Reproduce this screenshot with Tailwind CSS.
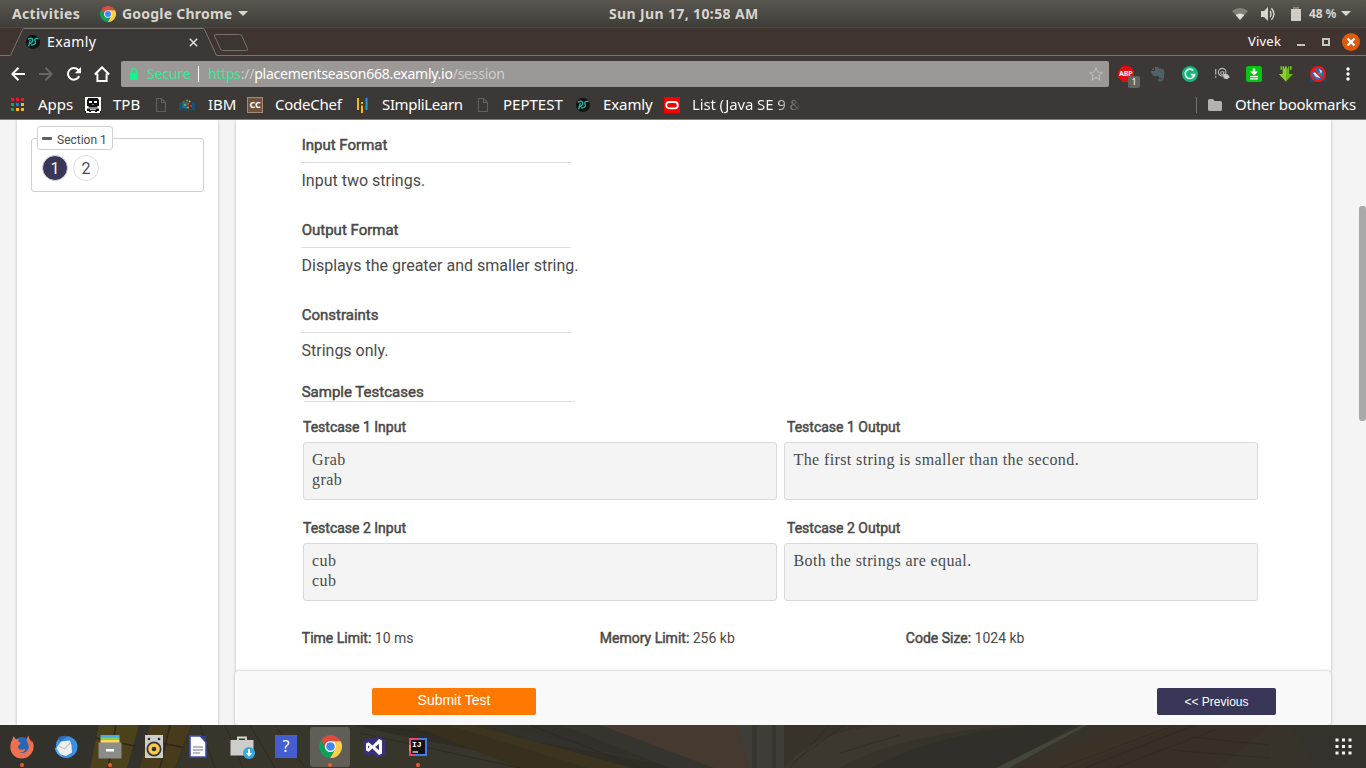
<!DOCTYPE html>
<html lang="en">
<head>
<meta charset="utf-8">
<title>Examly</title>
<script src="https://cdn.jsdelivr.net/npm/@tailwindcss/browser@4"></script>
</head>
<body class="w-[1366px] h-[768px] overflow-hidden flex flex-col bg-[#3c3835] font-['Noto_Sans',sans-serif]">

<!-- shared symbols -->
<svg width="0" height="0" class="absolute">
  <defs>
    <symbol id="chrome" viewBox="0 0 24 24">
      <path d="M2.300 5A12 12 0 0 1 22.600 6.400H12A5.600 5.600 0 0 0 7.150 14.800z" fill="#dd4b3e"/>
      <path d="M22.600 6.400A12 12 0 0 1 11.500 24L16.850 14.800A5.600 5.600 0 0 0 12 6.400z" fill="#ffcd46"/>
      <path d="M2.300 5A12 12 0 0 0 11.500 24L16.850 14.800A5.600 5.600 0 0 1 7.150 14.800z" fill="#109d58"/>
      <circle cx="12" cy="12" r="5.800" fill="#fff"/><circle cx="12" cy="12" r="4.500" fill="#4285f4"/>
    </symbol>
    <symbol id="examly" viewBox="0 0 14 14">
      <circle cx="7" cy="7" r="7" fill="#101211"/>
      <path d="M2.600 11.500 4.200 5.200M1.800 4.200Q4 3 5.700 3.400 7.300 4.200 6.500 6.200 5.600 8.400 3.600 8.600M12.600 3.600Q9.600 2.800 8.900 4.300 8.600 5.500 9.300 6.600 9.900 8.300 8.500 9.300 7 10.300 5 9.900" fill="none" stroke="#16b8a6" stroke-width="1.350"/>
    </symbol>
    <symbol id="page" viewBox="0 0 12 14">
      <path d="M1.500.5h5l4 4v9h-9zM6.500.5v4h4" fill="none" stroke="#62605d" stroke-width="1.100"/>
    </symbol>
  </defs>
</svg>

<!-- desktop top bar -->
<header class="h-[28px] shrink-0 flex items-center bg-linear-to-b from-[#595750] to-[#3e3d38] border-b border-[#4c4a45] text-[14px] font-bold text-[#d8d5ce] whitespace-nowrap">
  <div class="w-[100px] pl-3 tracking-[0.3px]">Activities</div>
  <svg class="w-4 h-4 shrink-0 mr-1.5"><use href="#chrome"/></svg>
  <div class="w-[116px] tracking-[0.22px]">Google Chrome</div>
  <svg class="w-[10px] h-[5px] shrink-0"><path d="M0 0h10L5 5z" fill="#d8d5ce"/></svg>
  <div class="ml-[361px] w-[623px] tracking-[0.37px]">Sun Jun 17, 10:58 AM</div>
  <svg class="w-4 h-3 shrink-0" viewBox="0 0 16 12"><path d="M0 3Q8-3 16 3L8 12z" fill="#827f79"/><path d="M3.600 7Q8 4 12.400 7L8 12z" fill="#e0ddd6"/></svg>
  <svg class="w-4 h-4 ml-3 shrink-0" viewBox="0 0 16 16"><path d="M1 5h3l4-4v14l-4-4H1z" fill="#d8d5ce"/><path d="M10 5q2 3 0 6M11.400 2.200q5 5.800 0 11.600" fill="none" stroke="#d8d5ce" stroke-width="1.400"/></svg>
  <svg class="w-3 h-[14px] ml-[14px] shrink-0" viewBox="0 0 12 14"><path d="M3 0h6v2h2v12H1V2h2z" fill="#cfccc6"/><path d="M3 0h6v2H3z" fill="#88857f"/></svg>
  <div class="ml-[7px] w-[32px] text-[12px] tracking-[-0.150px]">48 %</div>
  <svg class="w-[10px] h-[5px] shrink-0"><path d="M0 0h10L5 5z" fill="#d8d5ce"/></svg>
</header>

<!-- tab strip -->
<div class="relative h-[28px] shrink-0 bg-[#403431]">
  <svg class="absolute inset-0 w-[1366px] h-[28px]" viewBox="0 0 1366 28">
    <path d="M11 28 22.500 1.500Q23 .5 24 .5H203Q204 .5 204.500 1.500L216 28z" fill="#3c3835"/>
    <path d="M0 27.500H10.500L22.500 1.500Q23 .5 24 .5H203Q204 .5 204.500 1.500L216.500 27.500H1366" fill="none" stroke="#7b7571"/>
    <path d="M215.500 6.500h24q2 0 2.500 1.500l5.500 13q.6 1.500-1 1.500h-24q-1.500 0-2-1.500l-6-13q-.5-1.500 1-1.500z" fill="#3c3633" stroke="#77716d"/>
  </svg>
  <div class="relative h-[28px] flex items-center text-[14px] text-white">
    <svg class="w-[14px] h-[14px] ml-[26px] shrink-0"><use href="#examly"/></svg>
    <div class="ml-[7px] w-[142px] pb-[2px] tracking-[0.400px]">Examly</div>
    <svg class="w-[9px] h-[9px] shrink-0"><path d="M.8.8 8.200 8.200M8.200.8.8 8.200" stroke="#e4e1de" stroke-width="1.500"/></svg>
    <div class="ml-[1050px] w-[49px] text-[13px] tracking-[0.200px]">Vivek</div>
    <svg class="w-2 h-2 shrink-0 mt-2"><rect y="2" width="8" height="2" fill="#c9c4c0"/></svg>
    <svg class="w-2 h-2 ml-[17px] shrink-0"><rect x="1" y="1" width="6" height="6" fill="none" stroke="#c9c4c0" stroke-width="2"/></svg>
    <svg class="w-[18px] h-[18px] ml-3 shrink-0" viewBox="0 0 18 18"><circle cx="9" cy="9" r="9" fill="#e05a0b"/><path d="m5.500 5.500 7 7m0-7-7 7" stroke="#fff" stroke-width="2.400"/></svg>
  </div>
</div>

<!-- toolbar -->
<div class="h-[36px] shrink-0 flex items-center">
  <svg class="w-[14px] h-[14px] ml-[11px] shrink-0" viewBox="0 0 14 14"><path d="M14 7H1.500M7.500.8 1.400 7l6.100 6.200" fill="none" stroke="#fff" stroke-width="2"/></svg>
  <svg class="w-[14px] h-[14px] ml-[14px] shrink-0" viewBox="0 0 14 14"><path d="M0 7h12.500M6.500.8 12.600 7l-6.100 6.200" fill="none" stroke="#6a6663" stroke-width="2"/></svg>
  <svg class="w-[14px] h-[14px] ml-[14px] shrink-0" viewBox="0 0 14 14"><path d="M12.200 9A5.800 5.800 0 1 1 11 2.800L12 4" fill="none" stroke="#fff" stroke-width="2"/><path d="M14 0v6.200H7.800z" fill="#fff"/></svg>
  <svg class="w-4 h-4 ml-[13px] mr-[11px] shrink-0" viewBox="0 0 16 16"><path d="M.8 8.500 8 1.300l7.200 7.200M3.400 7.500V15h9.200V7.500" fill="none" stroke="#fff" stroke-width="2"/></svg>
  <div class="w-[988px] h-[26px] shrink-0 rounded-[2px] bg-[#9b9896] flex items-center text-[14px] leading-[26px] whitespace-nowrap">
    <svg class="w-2 h-3 ml-[9px] shrink-0 -mt-px" viewBox="0 0 8 12"><path d="M0 4.500h8V12H0z" fill="#12f58c"/><path d="M1.700 5V3a2.300 2.300 0 0 1 4.600 0v2" fill="none" stroke="#12f58c" stroke-width="1.200"/></svg>
    <span class="ml-[9px] w-[51px] text-[#3be897] tracking-[-0.150px]">Secure</span>
    <span class="w-px h-4 bg-white mr-[9px]"></span>
    <span class="w-[881px] tracking-[-0.250px] text-[#d0cecc]"><span class="text-[#3be897]">https</span>://<span class="text-white">placementseason668.examly.io</span>/session</span>
    <svg class="w-[14px] h-[14px] shrink-0" viewBox="0 0 14 14"><path d="m7 .9 1.800 4.100 4.500.4-3.400 3 1 4.400L7 10.500l-3.900 2.300 1-4.400-3.400-3 4.500-.4z" fill="none" stroke="#bab7b5" stroke-width="1.100"/></svg>
  </div>
  <!-- extensions -->
  <div class="relative ml-[9px] w-[16px] h-[16px] shrink-0">
    <svg class="w-4 h-4" viewBox="0 0 16 16"><path d="M4.700 0h6.600L16 4.700v6.600L11.300 16H4.700L0 11.300V4.700z" fill="#e30b0b"/></svg>
    <span class="absolute left-[1px] top-[4px] text-[7px] leading-[8px] font-bold text-white tracking-[-0.100px]">ABP</span>
    <span class="absolute left-[10px] top-[10px] w-[12px] h-[12px] rounded-[2px] bg-[#666463] text-[9px] leading-[12px] text-center text-white">1</span>
  </div>
  <svg class="w-[14px] h-[15px] ml-[17px] shrink-0" viewBox="0 0 14 15"><path d="M4 0h3l1 1.500 4 .5c1.500.5 1.600 4 1 8-.4 2.500-1 4-2.700 4.500H8.500c-1.500 0-2-2.500-.5-3h2v1.300H9V13h1.500V11L8 10.500 7 8.500C5.500 10 3 9.500 2 8.500 1 7.500.2 5.500 0 4h4z" fill="#4e6268"/><path d="M.3 3 3 .4V3z" fill="#4e6268"/><path d="M9.500 5.500q1.200-.8 2 .6z" fill="#363534"/></svg>
  <svg class="w-4 h-4 ml-[17px] shrink-0" viewBox="0 0 16 16"><circle cx="8" cy="8" r="8" fill="#12b779"/><path d="M11.300 4.500A4.700 4.700 0 1 0 12.600 8.600H8.800" fill="none" stroke="#efffF8" stroke-width="1.600"/><path d="M10.600 10.600l2-2.200" stroke="#efffF8" stroke-width="1.300"/></svg>
  <svg class="w-4 h-4 ml-4 shrink-0" viewBox="0 0 16 16"><path d="M1.700 3v5.500M1.700 10v1.700" stroke="#a9a6a3" stroke-width="1.400"/><path d="M10 9.500A3.800 3.800 0 1 1 12 6.500L11.500 8.500H9.800V5.500" fill="none" stroke="#bab7b4" stroke-width="1.100"/><circle cx="8.200" cy="7" r="1.500" fill="none" stroke="#bab7b4"/><path d="m9.500 8.800 4-.8 2.300 3.200-2.800 2-3.500-1z" fill="#c9c6c3"/></svg>
  <svg class="w-4 h-4 ml-4 shrink-0" viewBox="0 0 16 16"><rect width="16" height="16" rx="2.500" fill="#05c414"/><path d="M6.800 2.500h2.400v3H12L8 9.500l-4-4h2.800zM4 10h8v1.300H4zM4 12.300h8v1.300H4z" fill="#fff"/></svg>
  <svg class="w-4 h-4 ml-4 shrink-0" viewBox="0 0 16 16"><path d="M4.800.5h6.400V8H15l-7 7.500L1 8h3.800z" fill="#6cb818"/><path d="M4.800.5H8v15L1 8h3.800z" fill="#8bcf2c"/><path d="M2.500.3h1.600v3.500H2.500zM12 .3h1.600v3.500H12z" fill="#7cc61e"/><path d="M6.500 0v2.500M9.500 0v2.500" stroke="#3c3835" stroke-width=".9"/></svg>
  <svg class="w-4 h-4 ml-4 shrink-0" viewBox="0 0 16 16"><path d="M0 6h16v10H0z" fill="#164b78"/><circle cx="8" cy="8" r="7" fill="#256fb0"/><path d="m3 7 3-1 3 1 3 4-2 1-4-1zM9 3l3 2-1 3z" fill="#dfe9f2"/><circle cx="8" cy="8" r="7" fill="none" stroke="#f01616" stroke-width="2"/><path d="m3 3 10 10" stroke="#f01616" stroke-width="2"/></svg>
  <svg class="w-1 h-[14px] ml-5 shrink-0"><g fill="#fff"><circle cx="2" cy="2" r="1.700"/><circle cx="2" cy="7" r="1.700"/><circle cx="2" cy="12" r="1.700"/></g></svg>
</div>

<!-- bookmarks bar -->
<div class="h-[28px] pb-[2px] shrink-0 flex items-center border-b border-[#827e79] text-[15px] text-white whitespace-nowrap">
  <svg class="w-[13px] h-[14px] ml-[11px] mr-[14px] shrink-0" viewBox="0 0 13 14"><path d="M0 0h3v3H0zM5 0h3v3H5zM10 0h3v3h-3z" fill="#f0152c"/><path d="M0 5h3v3H0zM0 10h3v3H0z" fill="#1fa05a"/><path d="M5 5h3v3H5z" fill="#1c7bd8"/><path d="M10 5h3v3h-3zM5 10h3v3H5zM10 10h3v3h-3z" fill="#fdb813"/></svg>
  <span class="w-[47px]">Apps</span>
  <svg class="w-4 h-4 mr-3 shrink-0" viewBox="0 0 16 16"><path d="M0 0h16v16H0z" fill="#fff"/><path d="M3 1h10v1.500h1V9h-1.500v1.500h-9V9H2V2.500h1z" fill="#111"/><path d="M4 4h3v2H4zM9 4h3v2H9zM7.500 7h1v1h-1z" fill="#fff"/><path d="M2 11.500h12V14h-2v1h-2v-1H6v1H4v-1H2zM0 14h1v2H0zM15 14h1v2h-1z" fill="#111"/><path d="M5 12.300h6v.8H5z" fill="#fff"/></svg>
  <span class="w-[42px]">TPB</span>
  <svg class="w-3 h-[14px] mr-[12px] shrink-0"><use href="#page"/></svg>
  <svg class="w-4 h-3 mr-3 shrink-0" viewBox="0 0 16 12"><path d="M0 4 3 3v7l5 1 5-1V3l3 1v7l-6 .5H6L0 11z" fill="#145375"/><path d="M3 3h5v7L3 9z" fill="#1d6a8f"/><g fill="#e8392b"><circle cx="5" cy="2.500" r="1"/><circle cx="9" cy="5" r="1.200"/><circle cx="12" cy="7" r="1"/></g><g fill="#58b947"><circle cx="8" cy="1.500" r="1"/><circle cx="6" cy="6" r="1.200"/></g><g fill="#f9b21a"><circle cx="10.500" cy="2.500" r="1"/><circle cx="9" cy="8.500" r="1"/></g></svg>
  <span class="w-[39px] ml-[1px]">IBM</span>
  <span class="w-4 h-4 mr-3 shrink-0 bg-[#70523f] border border-[#a08a7b] text-[9px] leading-[13px] font-bold text-center tracking-[-0.200px]">CC</span>
  <span class="w-[82px] tracking-[-0.250px]">CodeChef</span>
  <svg class="w-[11px] h-4 mr-[14px] shrink-0" viewBox="0 0 11 16"><path d="M0 1h2v12H0zM4 5h2v2H4zM4 8.500h2V16H4z" fill="#fbb515"/><path d="M8.500 1h2v12h-2z" fill="#1a9ee0"/></svg>
  <span class="w-[95px] tracking-[-0.350px]">SImpliLearn</span>
  <svg class="w-3 h-[14px] mr-[14px] shrink-0"><use href="#page"/></svg>
  <span class="w-[73px]">PEPTEST</span>
  <svg class="w-[14px] h-[14px] mr-[13px] shrink-0"><use href="#examly"/></svg>
  <span class="w-[61px] tracking-[-0.100px]">Examly</span>
  <svg class="w-4 h-4 mr-3 shrink-0" viewBox="0 0 16 16"><path d="M0 0h16v16H0z" fill="#f80000"/><rect x="2.200" y="5" width="11.600" height="6.400" rx="3.200" fill="none" stroke="#fff" stroke-width="1.800"/></svg>
  <span class="w-[110px] tracking-[-0.130px] text-transparent bg-clip-text bg-linear-to-r from-white from-75% to-[#3c3835]">List (Java SE 9 &amp;</span>
  <span class="ml-[394px] w-px h-4 bg-[#726e6b]"></span>
  <svg class="w-[14px] h-[12px] ml-[11px] mr-[13px] shrink-0" viewBox="0 0 14 12"><path d="M0 1.500Q0 0 1.500 0H5l1.500 2h6Q14 2 14 3.500v7Q14 12 12.500 12h-11Q0 12 0 10.500z" fill="#b4b1ae"/></svg>
  <span class="tracking-[-0.220px]">Other bookmarks</span>
</div>

<!-- web page -->
<div class="h-[605px] shrink-0 flex bg-[#f4f4f4] font-[Roboto,sans-serif] text-[#4a4a4a]">
  <aside class="ml-[17px] w-[201px] bg-white shadow-[0_0_3px_rgba(0,0,0,0.25)] pt-[18px] pl-[14px] [clip-path:inset(0_-4px)]">
    <div class="relative w-[173px] h-[54px] border border-[#d0d0d0] rounded-[3px] pt-[16px] pl-[10px] flex gap-[5px]">
      <div class="absolute left-[5px] -top-[13px] w-[76px] h-[24px] border border-[#d0d0d0] rounded-[3px] bg-white flex items-center pl-[4px] pt-[4px] text-[12px] whitespace-nowrap">
        <span class="w-[10px] h-[3px] mr-[5px] -mt-[3px] rounded-[1px] bg-[#606060]"></span>Section 1
      </div>
      <span class="w-[26px] h-[26px] rounded-full bg-[#383758] border border-[#d5d5dd] text-white text-[16px] leading-[25px] text-center">1</span>
      <span class="w-[26px] h-[26px] rounded-full border border-[#dddddd] text-[16px] leading-[25px] text-center">2</span>
    </div>
  </aside>

  <main class="ml-[17px] w-[1096px] flex flex-col [clip-path:inset(0_-4px)]">
    <section class="ml-px h-[551px] shrink-0 bg-white shadow-[0_0_3px_rgba(0,0,0,0.25)] pt-[17px] pl-[65px]">
      <div class="w-[270px] h-[26px] border-b border-[#dcdcdc] pl-[0.700px] text-[15px] leading-[17px] [-webkit-text-stroke:0.500px]">Input Format</div>
      <p class="h-[59px] pt-[8px] pl-[0.500px] text-[16px] leading-[20px]">Input two strings.</p>
      <div class="w-[270px] h-[26px] border-b border-[#dcdcdc] pl-[0.700px] text-[15px] leading-[17px] [-webkit-text-stroke:0.500px]">Output Format</div>
      <p class="h-[59px] pt-[8px] pl-[0.500px] text-[16px] leading-[20px]">Displays the greater and smaller string.</p>
      <div class="w-[270px] h-[26px] border-b border-[#dcdcdc] pl-[0.700px] text-[15px] leading-[17px] [-webkit-text-stroke:0.500px]">Constraints</div>
      <p class="h-[50px] pt-[8px] pl-[0.500px] text-[16px] leading-[20px]">Strings only.</p>
      <div class="h-[18px] pl-[0.700px] text-[15px] leading-[18px] [-webkit-text-stroke:0.500px]">Sample Testcases</div>
      <div class="ml-[3px] w-[271px] h-px bg-[#dcdcdc]"></div>

      <div class="ml-[2px] mt-[16px] grid grid-cols-[474px_474px] gap-x-[7px] text-[14px] leading-[18px]">
        <div class="h-[24px] [-webkit-text-stroke:0.500px]">Testcase 1 Input</div>
        <div class="h-[24px] pl-[3px] [-webkit-text-stroke:0.500px]">Testcase 1 Output</div>
        <div class="h-[58px] border border-[#dadada] rounded-[3px] bg-[#f4f4f4] pl-[8px] pt-[7px] font-['Liberation_Serif',serif] text-[16px] leading-[20px] tracking-[0.400px]">Grab<br>grab</div>
        <div class="h-[58px] border border-[#dadada] rounded-[3px] bg-[#f4f4f4] pl-[8.500px] pt-[7px] font-['Liberation_Serif',serif] text-[16px] leading-[20px] tracking-[0.390px]">The first string is smaller than the second.</div>
        <div class="h-[24px] mt-[19px] [-webkit-text-stroke:0.500px]">Testcase 2 Input</div>
        <div class="h-[24px] mt-[19px] pl-[3px] [-webkit-text-stroke:0.500px]">Testcase 2 Output</div>
        <div class="h-[58px] border border-[#dadada] rounded-[3px] bg-[#f4f4f4] pl-[8px] pt-[7px] font-['Liberation_Serif',serif] text-[16px] leading-[20px] tracking-[0.400px]">cub<br>cub</div>
        <div class="h-[58px] border border-[#dadada] rounded-[3px] bg-[#f4f4f4] pl-[8.500px] pt-[7px] font-['Liberation_Serif',serif] text-[16px] leading-[20px] tracking-[0.390px]">Both the strings are equal.</div>
      </div>

      <div class="mt-[28px] pl-[0.800px] flex text-[14px] leading-[18px]">
        <div class="w-[298px]"><span class="[-webkit-text-stroke:0.500px]">Time Limit:</span> 10 ms</div>
        <div class="w-[306px]"><span class="[-webkit-text-stroke:0.500px]">Memory Limit:</span> 256 kb</div>
        <div><span class="[-webkit-text-stroke:0.500px]">Code Size:</span> 1024 kb</div>
      </div>
    </section>
    <footer class="relative h-[54px] shrink-0 rounded-[3px] bg-[#f9f9f9] shadow-[0_0_3px_rgba(0,0,0,0.3)] flex items-start justify-between pt-[17px] pl-[137px] pr-[55px] font-['Liberation_Sans',sans-serif] text-white">
      <button class="w-[164px] h-[27px] rounded-[2px] bg-[#ff7900] text-[14px] leading-[25px] pb-[2px]">Submit Test</button>
      <button class="w-[119px] h-[27px] rounded-[2px] bg-[#383758] text-[12px] leading-[26px]">&lt;&lt; Previous</button>
    </footer>
  </main>
  <div class="ml-auto mt-[86px] w-[7px] h-[215px] rounded-[3px] bg-[#a9a9a9]"></div>
</div>

<!-- dock -->
<div class="relative h-[43px] shrink-0 bg-[#393731]">
  <svg class="absolute inset-0 w-[1366px] h-[43px]" viewBox="0 0 1366 43" preserveAspectRatio="none">
    <path d="M0 0h1366v43H0z" fill="#33312b"/>
    <path d="M99 0h40l-12 43H90z" fill="#4b411b"/><path d="M150 0h41l-16 43h-35z" fill="#483b1b"/>
    <path d="m95 13 40 8M146 15l40 8M116 0l-8 43M170 0l-10 43" stroke="#2a2821" stroke-width="1.500"/>
    <path d="M192 0h220l120 43H176z" fill="#38362a"/>
    <path d="M350 0h90l245 43H560z" fill="#302d25"/><path d="m410 0 75 0 120 43h-85z" fill="#37301f"/>
    <path d="m448 0 25 0 160 43h-45z" fill="#3d3420"/>
    <path d="M500 0h130l110 43h-60z" fill="#32302a"/><path d="m560 0 70 0 90 38 30 5h-80z" fill="#35342f"/>
    <path d="M600 0h140l9 43h-35z" fill="#46392f"/>
    <path d="m200 0 15 43M225 0l18 43M250 0l25 43M275 0l30 43M430 8l-75-8M360 8l160 35M530 0l110 43" stroke="#2d2b24"/>
    <path d="M738 0h46v43h-35z" fill="#3e3d37"/><path d="M752 0h5v43h-5zM772 0h4v43h-4z" fill="#37352f"/>
    <path d="M784 0h582v43H784z" fill="#37332b"/>
    <path d="M784 43Q820 0 900 0h120Q900 8 840 43z" fill="#3d382e"/>
    <path d="M870 43Q950 3 1045 0h30L1000 43z" fill="#302f2a"/><path d="M996 43 1082 0h5l-78 43z" fill="#44463a"/>
    <path d="m1025 43 100-43h75l-105 43z" fill="#3b3227"/><path d="m1070 43 110-43h90l-50 43z" fill="#382f27"/>
    <path d="m1060 43 115-43M1115 43 1215 5M830 0l-40 43M845 0l-56 40M900 10l-60 18M1085 43l110-43M1190 12l80 8M1170 25l100 8" fill="none" stroke="#2b2923" opacity=".6"/>
    <path d="M1290 0h76v43h-50z" fill="#34322c"/>
  </svg>
  <div class="relative h-[43px] flex items-center gap-[4px] pl-[2px]">
    <div class="relative w-10 h-10 flex items-center justify-center">
      <svg class="w-[24px] h-[24px]" viewBox="0 0 24 24"><circle cx="12" cy="12" r="10" fill="#2867b5"/><path d="M3.500 1 6 4.500 9 4C7.500 6 8.500 7.500 10.500 8c.3 1.200-1.500 1.800-2.500 2.800-.5 3.500 3.500 5.200 6 3.200 1.200.2 1.200 1 .5 1.700-1.500 1.800-4 1.900-5 1.800 3.500 1.500 8 .2 9-4.500.6-3-.5-5-1.500-6.500-.5-2 0-4.500 1.500-6C18.500 3 20.500 5 21.500 7.500V5C24.500 9 24.300 15 21 19c-4.500 6-14 6-18.500 0C-.8 14 .2 8 2 5.500z" fill="#f0714f"/></svg>
      <span class="absolute left-[18px] top-[36px] w-1 h-1 rounded-full bg-[#f15a24]"></span>
    </div>
    <div class="w-10 h-10 flex items-center justify-center">
      <svg class="w-[24px] h-[24px]" viewBox="0 0 24 24"><path d="M2 12C1 5 7 .5 13 1c7 1 11 6 10.500 11.500C23 19 17 24 11 23 5 22 1 17 2 12z" fill="#3d8fe0"/><path d="M4 3Q9-.5 14 1.500L9 4 7 8z" fill="#2b6cb4"/><path d="m3 12 4-5.500 9-1 1.500 5 .5 7-6 3.500-7-2-3-3z" fill="#efefee"/><path d="m4 10.500 6.500 3.500 6-6.500" fill="none" stroke="#c3c8cd" stroke-width="1.300"/><path d="M.5 12q1 8 10.500 11-6-4-7-8z" fill="#5aa7ec"/></svg>
    </div>
    <div class="relative w-10 h-10 flex items-center justify-center">
      <svg class="w-[24px] h-[24px]" viewBox="0 0 24 24"><path d="M2.500 0h19v3h-19z" fill="#53a6e4"/><path d="M2.500 2.500h19V5h-19z" fill="#82cf48"/><path d="M2.500 5h19v3h-19z" fill="#fcd45b"/><path d="M.5 7.500h23v16H.5z" fill="#8c8c8b"/><rect x="8" y="14" width="8" height="2.500" fill="#fff"/></svg>
      <span class="absolute left-[18px] top-[36px] w-1 h-1 rounded-full bg-[#f15a24]"></span>
    </div>
    <div class="w-10 h-10 flex items-center justify-center">
      <svg class="w-[18px] h-[23px]" viewBox="0 0 18 23"><path d="M0 0h18v23H0z" fill="#cdcdcb"/><circle cx="4" cy="4" r="1.300" fill="#333"/><circle cx="14" cy="4" r="1.300" fill="#333"/><circle cx="9" cy="14" r="7.500" fill="#333"/><circle cx="9" cy="14" r="5.800" fill="#fcc84c"/><circle cx="9" cy="14" r="2.300" fill="#333"/></svg>
    </div>
    <div class="w-10 h-10 flex items-center justify-center">
      <svg class="w-[18px] h-[23px]" viewBox="0 0 18 23"><path d="M1 1h10.500L17 7v15H1z" fill="#fbfbfb" stroke="#3e4fb5" stroke-width="1.600"/><path d="M10.500 1H17v7z" fill="#33418f"/><path d="M4 12h10M4 15h10M4 18h7" stroke="#777" stroke-width="1.200"/></svg>
    </div>
    <div class="w-10 h-10 flex items-center justify-center">
      <svg class="w-[26px] h-[24px]" viewBox="0 0 26 24"><path d="M9 5V2.500h8V5" fill="none" stroke="#d8d8d6" stroke-width="1.800"/><path d="M1.500 5h23v15.500h-23z" fill="#cdcdcb"/><circle cx="20" cy="18" r="6" fill="#36a9e1"/><path d="M19 14h2v4h2.200L20 21.500 16.800 18H19z" fill="#fff"/></svg>
    </div>
    <div class="w-10 h-10 flex items-center justify-center">
      <div class="w-[22px] h-[23px] bg-[#445dd0] text-white text-[16px] leading-[23px] text-center">?</div>
    </div>
    <div class="relative w-10 h-10 flex items-center justify-center rounded-[3px] bg-[#605e56]">
      <svg class="w-[23px] h-[23px]"><use href="#chrome"/></svg>
      <span class="absolute left-[18px] top-[36px] w-1 h-1 rounded-full bg-[#f15a24]"></span>
    </div>
    <div class="w-10 h-10 flex items-center justify-center">
      <svg class="w-[24px] h-[24px]" viewBox="0 0 24 24"><path d="m1 6 6-3 3 2 6-4 7 4v14l-7 4-6-4-3 2-6-3z" fill="#37307c"/><path d="m4 8.500 2.500-1.200 4 3.300L17 4l3 1.500v13L17 20l-6.500-6.600-4 3.300L4 15.500zm2 2v3l1.700-1.500zM17 9l-4 3 4 3z" fill="#fff" fill-rule="evenodd"/></svg>
    </div>
    <div class="relative w-10 h-10 flex items-center justify-center">
      <svg class="w-[18px] h-[18px]" viewBox="0 0 18 18"><path d="M0 0h18v18H0z" fill="#3c7df0"/><path d="M0 0h10L6 18H0z" fill="#e8457c"/><path d="M0 7h3v6H0z" fill="#f08a3c"/><path d="M2 2h14v14H2z" fill="#111"/><path d="M3.500 14H9" stroke="#fff" stroke-width="1.200"/></svg>
      <span class="absolute left-[14px] top-[14px] font-['Liberation_Mono',monospace] font-bold text-[8px] leading-[8px] text-white">IJ</span>
      <span class="absolute left-[18px] top-[36px] w-1 h-1 rounded-full bg-[#f15a24]"></span>
    </div>
    <svg class="w-[17px] h-[17px] ml-auto mr-[14px]" viewBox="0 0 17 17" fill="#f5f4f2"><path d="M.5.5h3v3h-3zM7 .5h3v3H7zM13.500.5h3v3h-3zM.5 7h3v3h-3zM7 7h3v3H7zM13.500 7h3v3h-3zM.5 13.500h3v3h-3zM7 13.500h3v3H7zM13.500 13.500h3v3h-3z"/></svg>
  </div>
</div>
</body>
</html>
